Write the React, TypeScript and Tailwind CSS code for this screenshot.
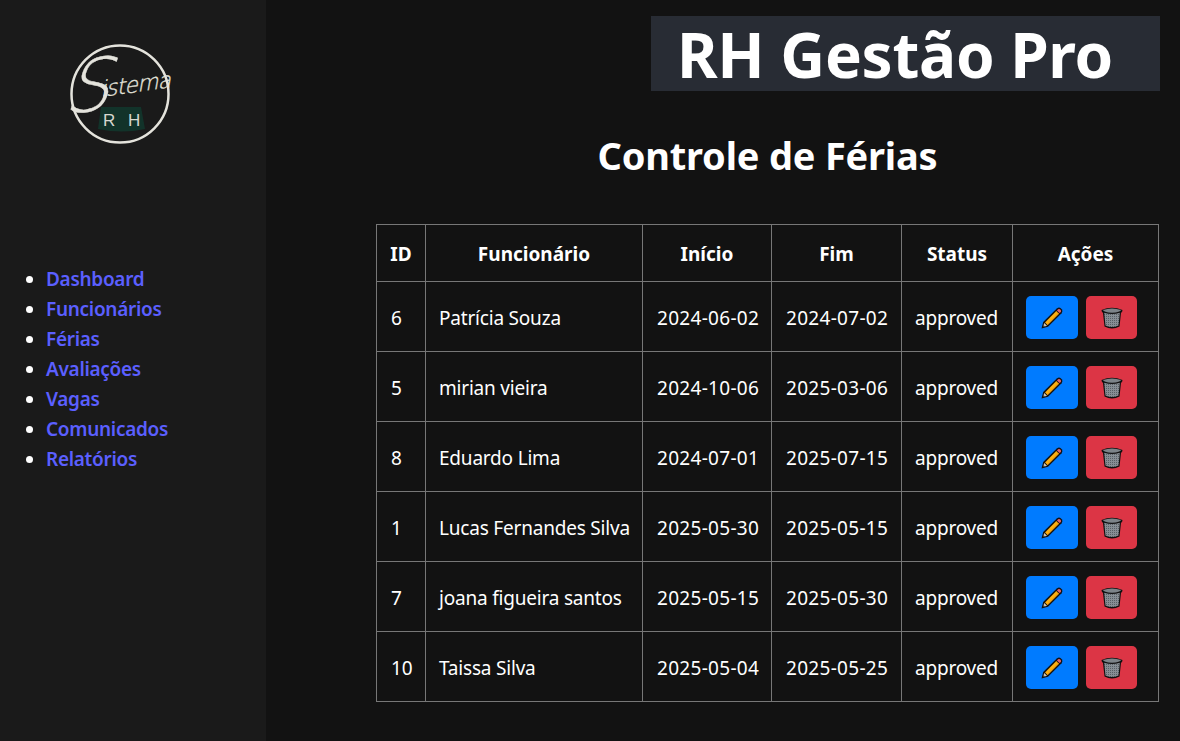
import { JSX } from "react";

const navLinks = ["Dashboard", "Funcionários", "Férias", "Avaliações", "Vagas", "Comunicados", "Relatórios"];

const rows = [
  { id: 6, name: "Patrícia Souza", start: "2024-06-02", end: "2024-07-02" },
  { id: 5, name: "mirian vieira", start: "2024-10-06", end: "2025-03-06" },
  { id: 8, name: "Eduardo Lima", start: "2024-07-01", end: "2025-07-15" },
  { id: 1, name: "Lucas Fernandes Silva", start: "2025-05-30", end: "2025-05-15" },
  { id: 7, name: "joana figueira santos", start: "2025-05-15", end: "2025-05-30" },
  { id: 10, name: "Taissa Silva", start: "2025-05-04", end: "2025-05-25" },
];

const headers = ["ID", "Funcionário", "Início", "Fim", "Status", "Ações"];

function Logo(): JSX.Element {
  return (
    <svg width="110" height="104" viewBox="0 0 110 104" className="block overflow-visible">
      <circle cx="50" cy="50" r="48.5" fill="none" stroke="#e4e3dc" strokeWidth="2.5" />
      <path d="M31 63 H71 L75 85 Q52 90 28 85 Z" fill="#12332a" />
      <text x="33" y="82" fontFamily="Liberation Sans, sans-serif" fontSize="17" fill="#d8d8d0">R</text>
      <text x="58" y="82" fontFamily="Liberation Sans, sans-serif" fontSize="17" fill="#d8d8d0">H</text>
      <g fontFamily="DejaVu Sans, sans-serif" fontWeight="200" fill="#e4e3dc" stroke="#e4e3dc" strokeWidth="0.35">
        <text fontSize="72" transform="translate(-7 70) rotate(-6) skewX(-24)">S</text>
        <text fontSize="22" letterSpacing="-0.7" transform="translate(31 53) rotate(-8) skewX(-18)">istema</text>
      </g>
    </svg>
  );
}

function Pencil(): JSX.Element {
  return (
    <svg width="24" height="24" viewBox="0 0 24 24">
      <path d="M1.5 22.5 L3.2 16 L16.8 2.4 Q19 1 20.5 2 L22 3.5 Q23 5 21.6 7.2 L8 20.8 Z" fill="#111" />
      <path d="M5 16.4 L16.3 5.1 L18.9 7.7 L7.6 19 Z" fill="#fbb012" />
      <path d="M6.9 18.3 L18.2 7 L18.9 7.7 L7.6 19 Z" fill="#e8980c" />
      <path d="M16.9 4.5 L18.2 3.2 Q19.3 2.6 20.2 3.4 L20.7 3.9 Q21.4 4.9 20.8 5.9 L19.5 7.1 Z" fill="#e8606c" />
      <path d="M3.1 20.9 L4.2 17 L7 19.8 Z" fill="#d0c8b8" />
      <path d="M3.1 20.9 L3.6 19.2 L4.8 20.4 Z" fill="#111" />
    </svg>
  );
}

function Trash(): JSX.Element {
  return (
    <svg width="24" height="24" viewBox="0 0 24 24">
      <defs>
        <pattern id="mesh" width="2" height="2" patternUnits="userSpaceOnUse">
          <rect width="2" height="2" fill="#868e94" />
          <rect width="1" height="1" fill="#586066" />
        </pattern>
      </defs>
      <path d="M1.5 4 Q12 -0.5 22.5 4 Q22.5 6 21 7 L19.5 20.5 Q12 24.5 4.5 20.5 L3 7 Q1.5 6 1.5 4 Z" fill="#111" />
      <path d="M4.2 6.8 Q12 9.2 19.8 6.8 L18.5 19.6 Q12 22.6 5.5 19.6 Z" fill="url(#mesh)" />
      <path d="M3 4 Q12 0.8 21 4 Q20.5 6.2 12 6.8 Q3.5 6.2 3 4 Z" fill="#7c8489" />
    </svg>
  );
}

export default function App(): JSX.Element {
  return (
    <div className="flex h-[741px] w-[1180px] overflow-hidden bg-[#121212] text-white font-['Noto_Sans',sans-serif]">
      {/* Sidebar */}
      <aside className="w-[266px] shrink-0 bg-[#1a1a1a]">
        <div className="ml-[70px] mt-[44px]">
          <Logo />
        </div>
        <ul className="mt-[116px] list-disc pl-[46px]">
          {navLinks.map((link) => (
            <li key={link} className="h-[30px] text-[19px] leading-[30px] font-semibold tracking-[-0.3px] marker:text-white">
              <a href="#" className="text-[#5b5fff]">
                {link}
              </a>
            </li>
          ))}
        </ul>
      </aside>

      {/* Main */}
      <main className="flex-1 flex flex-col">
        <div className="self-end mt-4 mr-5 flex h-[75px] w-[509px] items-center bg-[#282c34] pl-[26px]">
          <h1 className="text-[62px] leading-none font-bold tracking-[-0.3px]">RH Gestão Pro</h1>
        </div>
        <h2 className="ml-[110px] mt-[38px] w-[783px] text-center text-[38px] leading-[52px] font-bold tracking-[-0.2px]">
          Controle de Férias
        </h2>
        <table className="ml-[110px] mt-[43px] w-[782px] table-fixed border-collapse text-[19px] tracking-[-0.2px]">
          <thead>
            <tr className="h-[57px]">
              {headers.map((h, i) => (
                <th
                  key={h}
                  className={`border border-[#777] p-0 pt-[3px] text-center text-[19px] font-bold tracking-normal ${
                    ["w-[49px]", "w-[217px]", "w-[129px]", "w-[130px]", "w-[111px]", "w-[146px]"][i]
                  }`}
                >
                  {h}
                </th>
              ))}
            </tr>
          </thead>
          <tbody>
            {rows.map((r) => (
              <tr key={r.id} className="h-[70px]">
                <td className="border border-[#777] px-[14px] pt-[4px]">{r.id}</td>
                <td className="border border-[#777] px-[13px] pt-[4px] whitespace-nowrap">{r.name}</td>
                <td className="border border-[#777] px-[14px] pt-[4px] tracking-[0.3px] whitespace-nowrap">{r.start}</td>
                <td className="border border-[#777] px-[14px] pt-[4px] tracking-[0.3px] whitespace-nowrap">{r.end}</td>
                <td className="border border-[#777] px-[13px] pt-[4px]">approved</td>
                <td className="border border-[#777] px-[13px] pt-[2px]">
                  <div className="flex gap-2">
                    <button className="flex h-[43px] w-[52px] items-center justify-center rounded-[5px] bg-[#007bff]">
                      <Pencil />
                    </button>
                    <button className="flex h-[43px] w-[51px] items-center justify-center rounded-[5px] bg-[#dc3545]">
                      <Trash />
                    </button>
                  </div>
                </td>
              </tr>
            ))}
          </tbody>
        </table>
      </main>
    </div>
  );
}
